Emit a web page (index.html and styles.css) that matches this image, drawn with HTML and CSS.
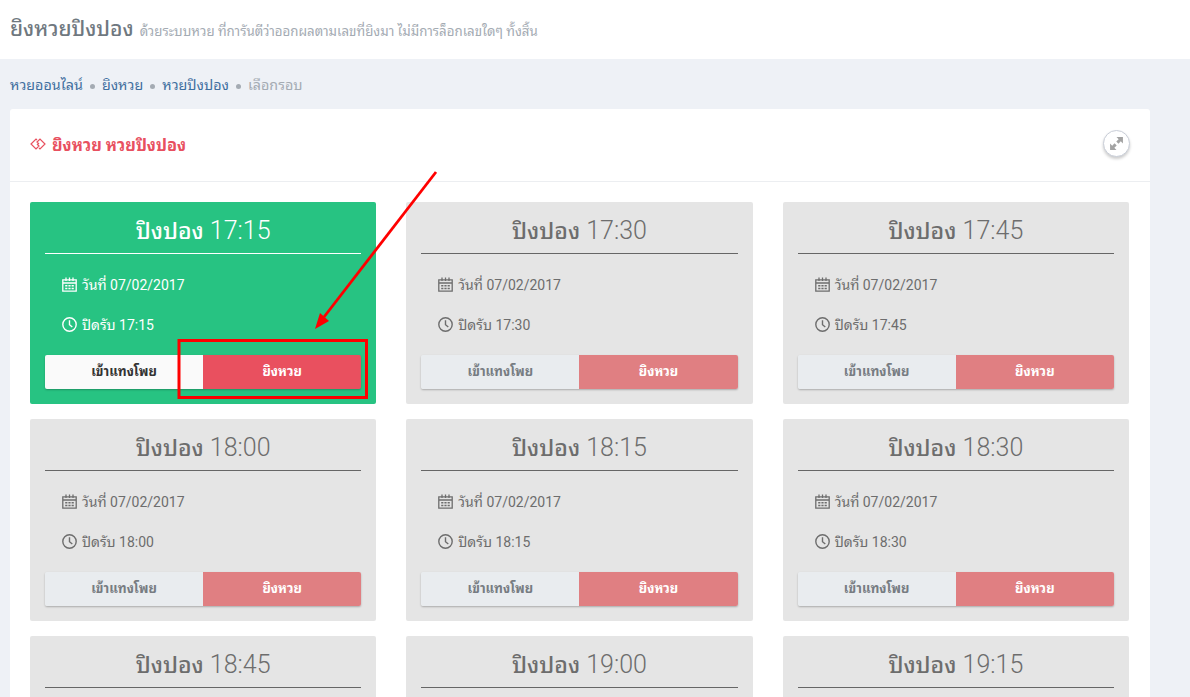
FILE: index.html
```html
<!DOCTYPE html>
<html lang="th">
<head>
<meta charset="utf-8">
<title>ยิงหวยปิงปอง</title>
<link rel="stylesheet" href="styles.css">
</head>
<body>
<header class="page-head">
  <h1 class="page-title">ยิงหวยปิงปอง</h1>
  <span class="page-sub">ด้วยระบบหวย ที่การันตีว่าออกผลตามเลขที่ยิงมา ไม่มีการล็อกเลขใดๆ ทั้งสิ้น</span>
</header>
<nav class="crumbs">
  <a class="crumb-link">หวยออนไลน์</a><i class="dot"></i>
  <a class="crumb-link">ยิงหวย</a><i class="dot"></i>
  <a class="crumb-link">หวยปิงปอง</a><i class="dot"></i>
  <span class="crumb-current">เลือกรอบ</span>
</nav>
<main class="panel">
  <div class="panel-head">
    <div class="panel-title">
      <svg class="panel-icon" viewBox="0 0 16 12" width="16" height="12"><path d="M7 2 6 1 1 6l5 5 3-3-2-2M9 10l1 1 5-5-5-5-3 3 2 2" fill="none" stroke="currentColor" stroke-width="1.200"/></svg>
      ยิงหวย หวยปิงปอง
    </div>
    <button class="expand" aria-label="ขยาย">
      <svg viewBox="0 0 14 14" width="15" height="15"><path d="M13 1v6l-2-2-2.200 2.200-2-2L9 3 7 1zM1 13V7l2 2 2.200-2.200 2 2L5 11l2 2z" fill="#a3a3a3"/></svg>
    </button>
  </div>
  <div class="grid" id="grid">
    <section class="round active">
      <h2 class="round-title"><b>ปิงปอง</b> 17:15</h2>
      <div class="info"><svg class="ico"><use href="#cal"/></svg><span>วันที่ 07/02/2017</span></div>
      <div class="info"><svg class="ico"><use href="#clock"/></svg><span>ปิดรับ 17:15</span></div>
      <div class="actions"><a class="btn-view">เข้าแทงโพย</a><a class="btn-shoot">ยิงหวย</a></div>
    </section>
    <section class="round">
      <h2 class="round-title"><b>ปิงปอง</b> 17:30</h2>
      <div class="info"><svg class="ico"><use href="#cal"/></svg><span>วันที่ 07/02/2017</span></div>
      <div class="info"><svg class="ico"><use href="#clock"/></svg><span>ปิดรับ 17:30</span></div>
      <div class="actions"><a class="btn-view">เข้าแทงโพย</a><a class="btn-shoot">ยิงหวย</a></div>
    </section>
    <section class="round">
      <h2 class="round-title"><b>ปิงปอง</b> 17:45</h2>
      <div class="info"><svg class="ico"><use href="#cal"/></svg><span>วันที่ 07/02/2017</span></div>
      <div class="info"><svg class="ico"><use href="#clock"/></svg><span>ปิดรับ 17:45</span></div>
      <div class="actions"><a class="btn-view">เข้าแทงโพย</a><a class="btn-shoot">ยิงหวย</a></div>
    </section>
    <section class="round">
      <h2 class="round-title"><b>ปิงปอง</b> 18:00</h2>
      <div class="info"><svg class="ico"><use href="#cal"/></svg><span>วันที่ 07/02/2017</span></div>
      <div class="info"><svg class="ico"><use href="#clock"/></svg><span>ปิดรับ 18:00</span></div>
      <div class="actions"><a class="btn-view">เข้าแทงโพย</a><a class="btn-shoot">ยิงหวย</a></div>
    </section>
    <section class="round">
      <h2 class="round-title"><b>ปิงปอง</b> 18:15</h2>
      <div class="info"><svg class="ico"><use href="#cal"/></svg><span>วันที่ 07/02/2017</span></div>
      <div class="info"><svg class="ico"><use href="#clock"/></svg><span>ปิดรับ 18:15</span></div>
      <div class="actions"><a class="btn-view">เข้าแทงโพย</a><a class="btn-shoot">ยิงหวย</a></div>
    </section>
    <section class="round">
      <h2 class="round-title"><b>ปิงปอง</b> 18:30</h2>
      <div class="info"><svg class="ico"><use href="#cal"/></svg><span>วันที่ 07/02/2017</span></div>
      <div class="info"><svg class="ico"><use href="#clock"/></svg><span>ปิดรับ 18:30</span></div>
      <div class="actions"><a class="btn-view">เข้าแทงโพย</a><a class="btn-shoot">ยิงหวย</a></div>
    </section>
    <section class="round">
      <h2 class="round-title"><b>ปิงปอง</b> 18:45</h2>
      <div class="info"><svg class="ico"><use href="#cal"/></svg><span>วันที่ 07/02/2017</span></div>
      <div class="info"><svg class="ico"><use href="#clock"/></svg><span>ปิดรับ 18:45</span></div>
      <div class="actions"><a class="btn-view">เข้าแทงโพย</a><a class="btn-shoot">ยิงหวย</a></div>
    </section>
    <section class="round">
      <h2 class="round-title"><b>ปิงปอง</b> 19:00</h2>
      <div class="info"><svg class="ico"><use href="#cal"/></svg><span>วันที่ 07/02/2017</span></div>
      <div class="info"><svg class="ico"><use href="#clock"/></svg><span>ปิดรับ 19:00</span></div>
      <div class="actions"><a class="btn-view">เข้าแทงโพย</a><a class="btn-shoot">ยิงหวย</a></div>
    </section>
    <section class="round">
      <h2 class="round-title"><b>ปิงปอง</b> 19:15</h2>
      <div class="info"><svg class="ico"><use href="#cal"/></svg><span>วันที่ 07/02/2017</span></div>
      <div class="info"><svg class="ico"><use href="#clock"/></svg><span>ปิดรับ 19:15</span></div>
      <div class="actions"><a class="btn-view">เข้าแทงโพย</a><a class="btn-shoot">ยิงหวย</a></div>
    </section>
  </div>
</main>
<svg class="sprite" width="0" height="0">
  <symbol id="cal" viewBox="0 0 15 15">
    <path d="M.8 2.800h13.400v11.400H.8zM.8 6h13.400M4 .5v3.500M7.500.5v3.500M11 .5v3.500" fill="none" stroke="currentColor" stroke-width="1.300"/>
    <path d="M3.200 8h2.200v1.400H3.200zM6.400 8h2.200v1.400H6.400zM9.600 8h2.200v1.400H9.600zM3.200 10.800h2.200v1.400H3.200zM6.400 10.800h2.200v1.400H6.400zM9.600 10.800h2.200v1.400H9.600z" fill="currentColor"/>
  </symbol>
  <symbol id="clock" viewBox="0 0 15 15">
    <circle cx="7.500" cy="7.500" r="6.700" fill="none" stroke="currentColor" stroke-width="1.400"/>
    <path d="M7.500 3.300v4.400l2.800 2.300" fill="none" stroke="currentColor" stroke-width="1.400"/>
  </symbol>
</svg>
<svg class="annotation" width="1190" height="697" viewBox="0 0 1190 697">
  <path d="M436 172 324 317" fill="none" stroke="#f00" stroke-width="2.800"/>
  <path d="M315 329 320 313 329 321z" fill="#f00"/>
  <rect x="179" y="340.500" width="187.500" height="57" fill="none" stroke="#f00" stroke-width="3"/>
</svg>
</body>
</html>
```

FILE: styles.css
```css
* { box-sizing: border-box; }
body {
  margin: 0;
  height: 697px;
  overflow: hidden;
  position: relative;
  background: #eef1f6;
  font-family: Roboto, "Noto Sans Thai Looped", sans-serif;
  color: #6b6f76;
}
.page-head {
  height: 59px;
  background: #fff;
  display: flex;
  align-items: baseline;
  padding: 15px 10px 0;
  gap: 6px;
}
.page-title {
  margin: 0;
  font-size: 21px;
  line-height: 28px;
  font-weight: 500;
  color: #6f7880;
}
.page-sub { font-size: 13.300px; color: #a4abb3; }
.crumbs {
  height: 50px;
  padding: 16px 10px 0;
  display: flex;
  align-items: flex-start;
  font-size: 14.300px;
  line-height: 20px;
  color: #a4abb3;
}
.crumb-link { color: #3f6f9f; }
.dot {
  width: 5px;
  height: 5px;
  margin: 9px 7px 0;
  border-radius: 50%;
  background: #a4abb3;
}
.panel {
  margin: 0 40px 0 10px;
  background: #fff;
  border-radius: 3px;
}
.panel-head {
  height: 73px;
  padding: 0 20px 3px;
  display: flex;
  align-items: center;
  justify-content: space-between;
  border-bottom: 1px solid #eceef1;
}
.panel-title {
  display: flex;
  align-items: center;
  gap: 6px;
  font-size: 16.400px;
  font-weight: 700;
  color: #e8505f;
}
.panel-icon { color: #e8505f; }
.expand {
  width: 27px;
  height: 27px;
  padding: 0;
  display: flex;
  align-items: center;
  justify-content: center;
  background: #fff;
  border: 1px solid #c9ced8;
  border-radius: 50%;
  box-shadow: 0 2px 3px rgba(0,0,0,.2);
}
.grid {
  display: grid;
  grid-template-columns: repeat(3, 1fr);
  column-gap: 30px;
  row-gap: 15px;
  padding: 20px 21px 20px 20px;
}
.round {
  height: 202px;
  padding: 15px 15px 0;
  background: #e5e5e5;
  border-radius: 2px;
  color: #6d6d6d;
}
.round-title {
  margin: 0 0 20px;
  height: 37px;
  border-bottom: 1px solid #666;
  text-align: center;
  font-size: 25px;
  line-height: 28px;
  font-weight: 300;
}
.round-title b { font-size: 23px; font-weight: 500; }
.info {
  height: 40px;
  padding-left: 17px;
  display: flex;
  align-items: flex-start;
  gap: 5px;
  font-size: 14px;
  line-height: 22px;
}
.ico { width: 15px; height: 15px; margin-top: 3px; flex: none; }
.actions {
  display: flex;
  height: 34px;
  margin-top: 1px;
  font-size: 13px;
  font-weight: 700;
  line-height: 34px;
  text-align: center;
  border-radius: 2px;
  box-shadow: 0 1px 2px rgba(0,0,0,.25);
}
.btn-view { width: 158px; background: #e9ecef; color: #777c82; border-radius: 2px 0 0 2px; }
.btn-shoot { flex: 1; background: #e07f82; color: #fff; border-radius: 0 2px 2px 0; }
.round.active { background: #27c382; color: #fff; }
.round.active .round-title { border-color: #fff; }
.round.active .btn-view { background: #fafafa; color: #333; }
.round.active .btn-shoot { background: #e9505f; }
.sprite { position: absolute; }
.annotation { position: absolute; left: 0; top: 0; pointer-events: none; }
```
